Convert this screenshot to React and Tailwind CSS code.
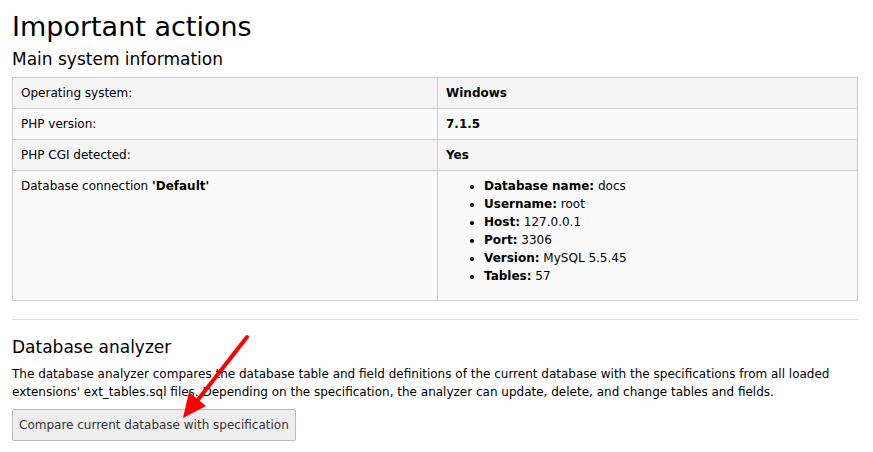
import React from "react";

const rows = [
  { label: "Operating system:", value: "Windows" },
  { label: "PHP version:", value: "7.1.5" },
  { label: "PHP CGI detected:", value: "Yes" },
];

const dbInfo = [
  ["Database name:", "docs"],
  ["Username:", "root"],
  ["Host:", "127.0.0.1"],
  ["Port:", "3306"],
  ["Version:", "MySQL 5.5.45"],
  ["Tables:", "57"],
];

function Arrow() {
  return (
    <svg
      className="absolute left-0 top-0 pointer-events-none"
      width="873"
      height="452"
      viewBox="0 0 873 452"
    >
      <line x1="247" y1="337" x2="197" y2="401" stroke="#ff0000" strokeWidth="4" strokeLinecap="round" />
      <polygon points="183,418 206,406 189,392" fill="#ff0000" />
    </svg>
  );
}

export default function App() {
  return (
    <div
      className="relative w-[873px] h-[452px] bg-white text-black overflow-hidden"
      style={{ fontFamily: '"DejaVu Sans", Verdana, sans-serif' }}
    >
      <div className="pl-3 w-[858px]">
        <h1 className="text-[27px] leading-[36px] pt-[9px] font-normal">
          Important actions
        </h1>
        <h2 className="text-[17px] leading-[24px] mt-[2px] mb-[6px] font-normal">
          Main system information
        </h2>

        <table className="w-full border-collapse text-[12px] leading-[15px]">
          <tbody>
            {rows.map((r, i) => (
              <tr key={r.label} className={i % 2 === 0 ? "bg-[#f5f5f5]" : "bg-[#fafafa]"}>
                <td className="w-[425px] border border-[#cccccc] px-2 pt-[8px] pb-[7px] align-top">
                  {r.label}
                </td>
                <td className="border border-[#cccccc] px-2 pt-[8px] pb-[7px] align-top font-bold">
                  {r.value}
                </td>
              </tr>
            ))}
            <tr className="bg-[#fafafa]">
              <td className="border border-[#cccccc] px-2 pt-[8px] pb-[7px] align-top">
                Database connection <b>'Default'</b>
              </td>
              <td className="border border-[#cccccc] px-2 pt-[6px] pb-[7px] align-top">
                <ul className="list-disc pl-[38px] mb-[8px] leading-[18px]">
                  {dbInfo.map(([k, v]) => (
                    <li key={k}>
                      <b>{k}</b> {v}
                    </li>
                  ))}
                </ul>
              </td>
            </tr>
          </tbody>
        </table>

        <hr className="mt-[18px] border-0 border-t border-[#dddddd]" />

        <h2 className="text-[17px] leading-[24px] mt-[15px] mb-[6px] font-normal">
          Database analyzer
        </h2>
        <p className="text-[12px] leading-[18px] pr-[26px]">
          The database analyzer compares the database table and field definitions of the current
          database with the specifications from all loaded extensions' ext_tables.sql files.
          Depending on the specification, the analyzer can update, delete, and change tables and
          fields.
        </p>
        <button className="mt-[8px] h-[32px] px-[6px] text-[12px] text-[#333333] bg-[#eeeeee] border border-[#bbbbbb] rounded-[2px]">
          Compare current database with specification
        </button>
      </div>
      <Arrow />
    </div>
  );
}
